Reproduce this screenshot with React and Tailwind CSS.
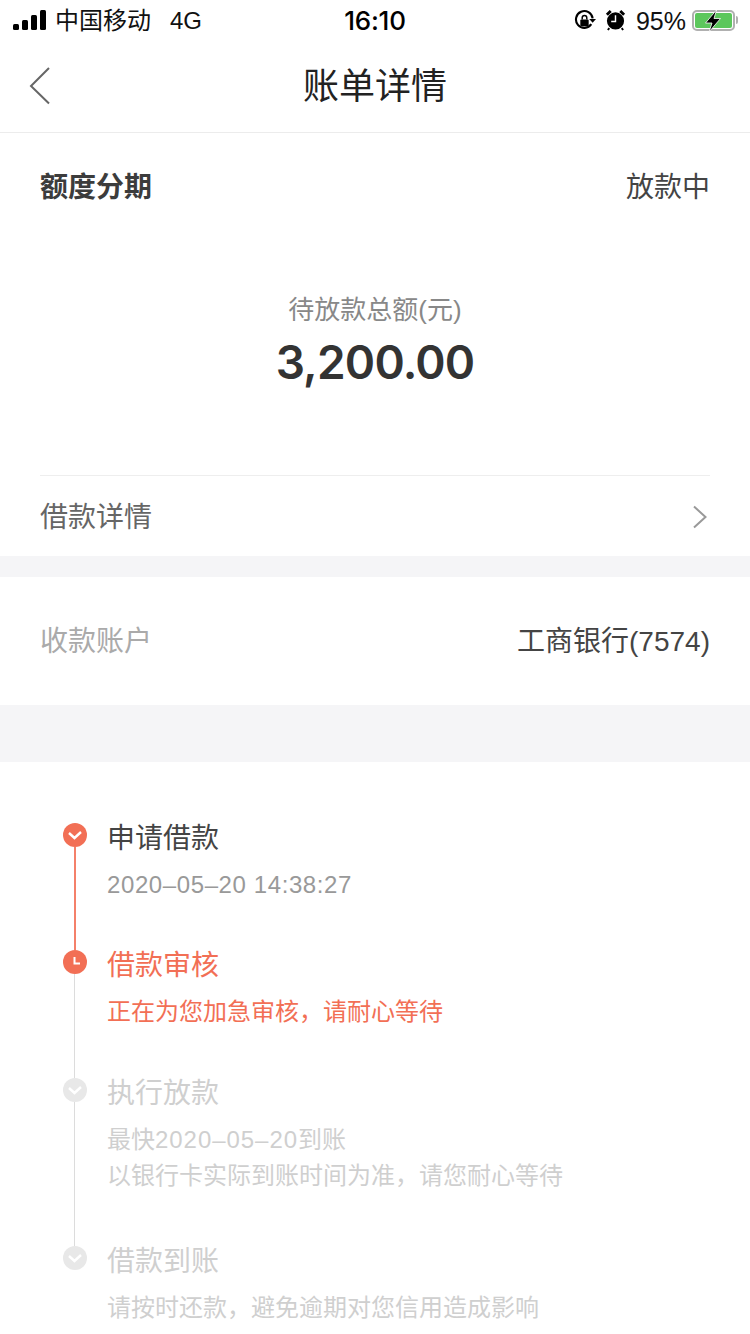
import React from 'react';

const steps = [
  { title: '申请借款', lines: [<span className="tracking-[0.6px]">2020–05–20 14:38:27</span>], icon: 'check', state: 'done', h: 'h-[127px]', line: 'w-[2px] bg-[#f4806a]' },
  { title: '借款审核', lines: ['正在为您加急审核，请耐心等待'], icon: 'clock', state: 'active', h: 'h-[128px]', line: 'w-[1px] bg-[#dcdcdc]' },
  { title: '执行放款', lines: [<>最快<span className="tracking-[0.95px]">2020–05–20</span>到账</>, '以银行卡实际到账时间为准，请您耐心等待'], icon: 'check', state: 'todo', h: 'h-[168px]', line: 'w-[1px] bg-[#dcdcdc]' },
  { title: '借款到账', lines: ['请按时还款，避免逾期对您信用造成影响'], icon: 'check', state: 'todo', h: 'h-[100px]', line: '' },
];

function StepIcon({ icon, state }) {
  const fill = state === 'todo' ? '#e8e8e8' : '#f26f55';
  return (
    <svg width="24" height="24" viewBox="0 0 24 24" className="shrink-0">
      <circle cx="12" cy="12" r="12" fill={fill} />
      {icon === 'check' ? (
        <path d="M6 10l5.5 5L18 9" fill="none" stroke="#fff" strokeWidth="2.4" />
      ) : (
        <path d="M11.5 7v6.5H17" fill="none" stroke="#fff" strokeWidth="2" />
      )}
    </svg>
  );
}

function Signal() {
  return (
    <div className="flex items-end gap-[3px] h-[20px]">
      <div className="w-[6px] h-[6px] rounded-[1.5px] bg-black" />
      <div className="w-[6px] h-[10px] rounded-[1.5px] bg-black" />
      <div className="w-[6px] h-[15px] rounded-[1.5px] bg-black" />
      <div className="w-[6px] h-[20px] rounded-[1.5px] bg-black" />
    </div>
  );
}

function StatusBar() {
  return (
    <div className="h-[40px] relative flex items-center justify-between pl-[13px] pr-[12px] text-black">
      <div className="flex items-center">
        <Signal />
        <span className="ml-[9px] pt-[1px] text-[24px] leading-[40px] text-[#111]">中国移动</span>
        <span className="ml-[19px] pt-[1px] text-[24px] leading-[40px] text-[#111]">4G</span>
      </div>
      <div className="absolute left-0 right-0 top-[1px] text-center font-['Inter',sans-serif] text-[26px] font-medium leading-[40px] tracking-[-0.2px]">16:10</div>
      <div className="flex items-center">
        <svg width="23" height="23" viewBox="0 0 22 22">
          <path d="M17.5 14.5A8 8 0 1 1 18.8 9" fill="none" stroke="#000" strokeWidth="2" />
          <path d="M15.5 9.5h6.5l-3.2 3.6z" fill="#000" />
          <rect x="7" y="10" width="8" height="6.5" rx="1" fill="#000" />
          <path d="M8.8 10V8.4a2.2 2.2 0 0 1 4.4 0V10" fill="none" stroke="#000" strokeWidth="1.4" />
        </svg>
        <svg width="21" height="24" viewBox="0 0 22 24" className="ml-[9px]">
          <circle cx="11" cy="13" r="9" fill="#000" />
          <path d="M2 6.5L6 2.5M20 6.5L16 2.5" stroke="#000" strokeWidth="3" />
          <path d="M4.5 20.5L3 22.5M17.5 20.5L19 22.5" stroke="#000" strokeWidth="2" />
          <path d="M11 7v6.5H6.5" fill="none" stroke="#fff" strokeWidth="1.5" />
        </svg>
        <span className="ml-[10px] pt-[1px] text-[25px] leading-[40px] text-[#111]">95%</span>
        <div className="ml-[6px] relative w-[43px] h-[21px] rounded-[5px] border-2 border-[#b0b0b0] p-[1px]">
          <div className="w-full h-full rounded-[2px] bg-[#5cc75c]" />
          <svg width="18" height="22" viewBox="0 0 18 22" className="absolute left-[10px] top-[-2px]">
            <path d="M12.5 0L1.5 13h6.5L5 22 16.5 8.5H10z" fill="#000" stroke="#fff" strokeWidth="0.8" />
          </svg>
        </div>
        <div className="ml-[1px] w-[2px] h-[8px] rounded-r bg-[#b0b0b0]" />
      </div>
    </div>
  );
}

function App() {
  return (
    <div className="w-[750px] h-[1334px] overflow-hidden bg-white font-['Liberation_Sans','Noto_Sans_CJK_SC',sans-serif]">
      <StatusBar />

      {/* Header */}
      <header className="h-[93px] relative flex items-center justify-center border-b border-[#ececec]">
        <svg width="24" height="40" viewBox="0 0 24 40" className="absolute left-[28px] top-[26px]">
          <path d="M21 2L3 20l18 17.5" fill="none" stroke="#666" strokeWidth="2" />
        </svg>
        <h1 className="pt-[2px] text-[36px] font-normal leading-none text-[#222]">账单详情</h1>
      </header>

      {/* Bill summary */}
      <section className="px-[40px]">
        <div className="flex items-center justify-between pt-[37px] h-[73px]">
          <span className="text-[28px] font-bold leading-none text-[#3c3c3c]">额度分期</span>
          <span className="text-[28px] leading-none text-[#444]">放款中</span>
        </div>
        <div className="pt-[87px] text-center h-[270px] border-b border-[#eeeeee]">
          <div className="text-[26px] leading-[34px] text-[#888]">待放款总额(元)</div>
          <div className="mt-[9px] font-['Inter',sans-serif] text-[46px] font-semibold leading-[52px] tracking-[-0.8px] text-[#333]">3,200.00</div>
        </div>
        <div className="flex items-center justify-between h-[80px]">
          <span className="pt-[3px] text-[28px] leading-none text-[#666]">借款详情</span>
          <svg width="16" height="24" viewBox="0 0 16 24" className="mr-[2px] mt-[2px]">
            <path d="M2 1.5L13.5 12 2 22.5" fill="none" stroke="#999" strokeWidth="2" />
          </svg>
        </div>
      </section>

      <div className="h-[21px] bg-[#f5f5f7]" />

      {/* Account */}
      <section className="h-[128px] px-[40px] flex items-center justify-between">
        <span className="pt-[2px] text-[28px] text-[#aaa]">收款账户</span>
        <span className="pt-[2px] text-[28px] text-[#444]">工商银行(7574)</span>
      </section>

      <div className="h-[57px] bg-[#f5f5f7]" />

      {/* Timeline */}
      <section className="pt-[61px] pl-[63px]">
        {steps.map((s) => (
          <div key={s.title} className={`flex ${s.h}`}>
            <div className="w-[24px] flex flex-col items-start">
              <StepIcon icon={s.icon} state={s.state} />
              {s.line && <div className={`flex-1 ml-[11px] ${s.line}`} />}
            </div>
            <div className="ml-[20px]">
              <div className={`text-[28px] leading-[32px] ${s.state === 'done' ? 'text-[#444]' : s.state === 'active' ? 'text-[#f26f55]' : 'text-[#cfcfcf]'}`}>{s.title}</div>
              <div className={`mt-[12px] text-[24px] leading-[36px] ${s.state === 'done' ? 'text-[#999]' : s.state === 'active' ? 'text-[#f26f55]' : 'text-[#cfcfcf]'}`}>
                {s.lines.map((l, i) => <div key={i}>{l}</div>)}
              </div>
            </div>
          </div>
        ))}
      </section>
    </div>
  );
}

export default App;
